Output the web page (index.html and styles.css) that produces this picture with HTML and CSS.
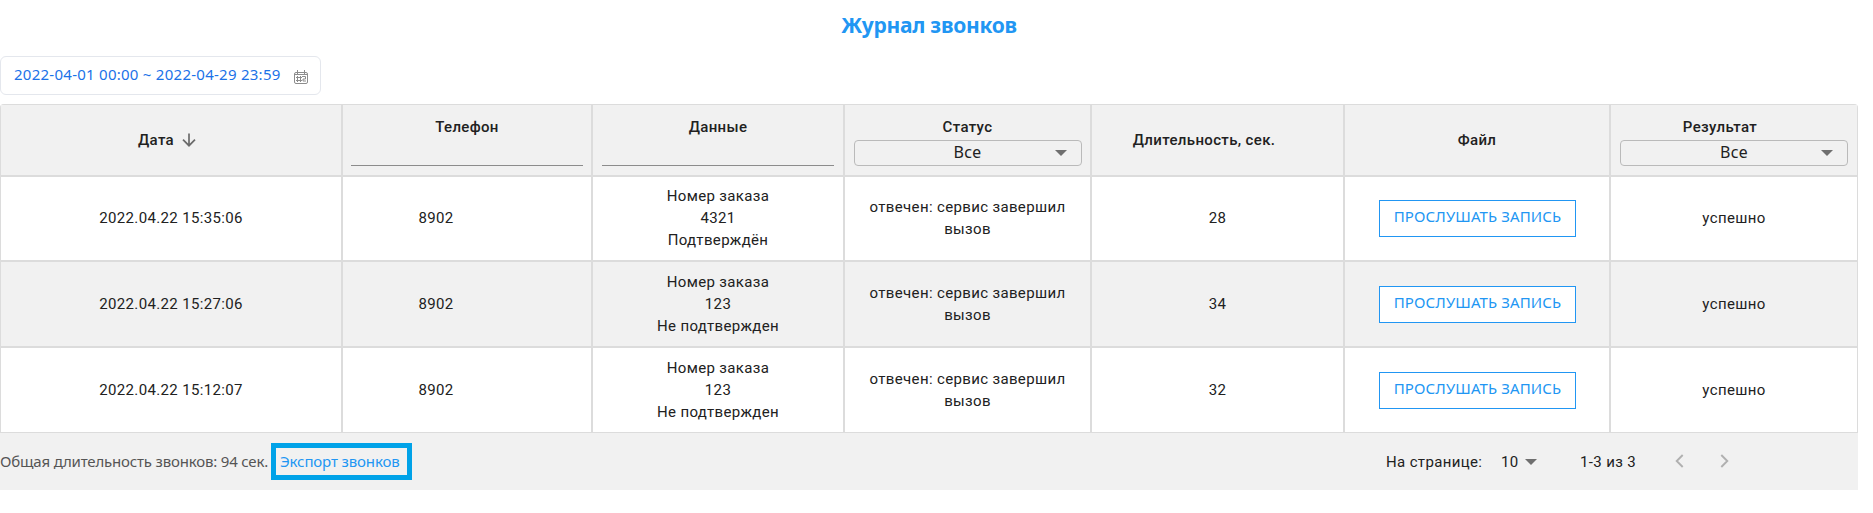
FILE: index.html
```html
<!DOCTYPE html>
<html lang="ru">
<head>
<meta charset="utf-8">
<title>Журнал звонков</title>
<link rel="stylesheet" href="styles.css">
</head>
<body>
<main class="page">
  <h1 class="title"><span>Журнал звонков</span></h1>
  <div class="range"><span class="range-text">2022-04-01 00:00 ~ 2022-04-29 23:59</span>
    <svg class="calendar" width="14" height="14" viewBox="0 0 14 14" fill="none" stroke="#8c8c8c"><path d="M3.500 0v4M10.500 0v4M.5 12V4Q.5 2.500 2 2.500h10q1.500 0 1.500 1.500v8q0 1.500-1.500 1.500H2Q.5 13.500.5 12zM.5 4.500h13M3.500 6v6M6.500 6v6M2 7.500h6M2 10.500h6M8 6.500h3.500v2.500H9v2h3"/></svg>
  </div>
  <section class="grid">
    <div class="row head">
      <div class="cell date"><span class="sort">Дата<svg width="14" height="14" viewBox="0 0 14 14" fill="none" stroke="#6b6b6b" stroke-width="1.700"><path d="M7 .5v12M1 6.700l6 6 6-6"/></svg></span></div>
      <div class="cell filter"><span class="label">Телефон</span><div class="line"></div></div>
      <div class="cell filter"><span class="label">Данные</span><div class="line"></div></div>
      <div class="cell filter"><span class="label">Статус</span><div class="select"><span>Все</span><i class="caret"></i></div></div>
      <div class="cell duration">Длительность, сек.</div>
      <div class="cell">Файл</div>
      <div class="cell filter result"><span class="label">Результат</span><div class="select"><span>Все</span><i class="caret"></i></div></div>
    </div>
    <div class="row first">
      <div class="cell">2022.04.22 15:35:06</div><div class="cell phone">8902</div><div class="cell">Номер заказа<br>4321<br>Подтверждён</div><div class="cell">отвечен: сервис завершил<br>вызов</div><div class="cell">28</div><div class="cell"><button class="listen">ПРОСЛУШАТЬ ЗАПИСЬ</button></div><div class="cell">успешно</div>
    </div>
    <div class="row alt">
      <div class="cell">2022.04.22 15:27:06</div><div class="cell phone">8902</div><div class="cell">Номер заказа<br>123<br>Не подтвержден</div><div class="cell">отвечен: сервис завершил<br>вызов</div><div class="cell">34</div><div class="cell"><button class="listen">ПРОСЛУШАТЬ ЗАПИСЬ</button></div><div class="cell">успешно</div>
    </div>
    <div class="row">
      <div class="cell">2022.04.22 15:12:07</div><div class="cell phone">8902</div><div class="cell">Номер заказа<br>123<br>Не подтвержден</div><div class="cell">отвечен: сервис завершил<br>вызов</div><div class="cell">32</div><div class="cell"><button class="listen">ПРОСЛУШАТЬ ЗАПИСЬ</button></div><div class="cell">успешно</div>
    </div>
  </section>
  <footer class="footer">
    <span class="total">Общая длительность звонков: 94 сек.</span>
    <a class="export"><span>Экспорт звонков</span></a>
    <div class="pager">
      <span class="per">На странице:</span><span class="size">10</span><i class="caret"></i><span class="count">1-3 из 3</span>
      <svg class="prev" width="9" height="14" viewBox="0 0 9 14" fill="none" stroke="#b0b0b0" stroke-width="1.900"><path d="M7.700 1l-6 6 6 6"/></svg>
      <svg width="9" height="14" viewBox="0 0 9 14" fill="none" stroke="#b0b0b0" stroke-width="1.900"><path d="M1.300 1l6 6-6 6"/></svg>
    </div>
  </footer>
</main>
</body>
</html>
```

FILE: styles.css
```css
* { box-sizing: border-box; }
body { margin: 0; background: #fff; color: #212121; font-family: Roboto, sans-serif; font-size: 15px; line-height: 22px; letter-spacing: .35px; }
.page { width: 1858px; }
.title { margin: 0; height: 56px; padding-top: 10px; font: 700 21px/30px "Noto Sans", sans-serif; letter-spacing: -.25px; color: #2196f3; text-align: center; }
.range { display: flex; width: 321px; height: 39px; padding: 0 12px 0 13px; border: 1px solid #e4e7ed; border-radius: 6px; font: 15px/35px "Noto Sans", sans-serif; letter-spacing: .26px; color: #1b72e8; white-space: nowrap; }
.range-text { width: 280px; }
.calendar { margin-top: 13px; flex: none; }
.grid { margin-top: 9px; border-radius: 4px 4px 0 0; overflow: hidden; }
.row { display: grid; grid-template-columns: 342px 250px 252px 247px 253px 266px 248px; height: 86px; }
.row.first { height: 85px; }
.cell { display: flex; align-items: center; justify-content: center; text-align: center; border: 1px solid #dcdcdc; padding-bottom: 1px; white-space: nowrap; }
.head { height: 72px; background: #f1f1f1; font-weight: 500; }
.head .cell { padding-bottom: 0; }
.head .date { padding-right: 8px; }
.alt { background: #f1f1f1; }
.filter { flex-direction: column; justify-content: flex-start; padding: 11px 9px 0; }
.label { height: 24px; }
.result .label { margin-right: 28px; }
.line { width: 232px; height: 26px; border-bottom: 1px solid #8c8c8c; }
.select { display: grid; grid-template-columns: 1fr auto; align-items: center; width: 228px; height: 26px; padding: 0 14px 0 41px; border: 1px solid #bababa; border-radius: 4px; font: 400 16px/24px "Noto Sans", sans-serif; letter-spacing: .4px; }
.select span { padding-right: 15px; margin-top: -2px; }
.caret { border: 6px solid transparent; border-top-color: #6f6f6f; border-bottom: 0; }
.sort { display: flex; align-items: center; gap: 8px; }
.duration { padding-right: 27px; }
.phone { padding-right: 62px; }
.listen { width: 197px; height: 37px; margin: 2px 0 0 1px; padding: 0 0 5px; border: 1px solid #2196f3; background: #fff; color: #2196f3; font: 15px/30px "Noto Sans", sans-serif; letter-spacing: .12px; white-space: nowrap; }
.first .listen { margin-top: 0; }
.footer { display: flex; align-items: center; height: 57px; background: #f1f1f1; font-family: "Noto Sans", sans-serif; color: #555; white-space: nowrap; }
.total { width: 271px; letter-spacing: -.18px; padding-bottom: 1px; }
.export { display: flex; align-items: center; width: 141px; height: 37px; padding: 0 0 1px 4px; border: 5px solid #00a2e8; color: #2196f3; letter-spacing: -.13px; }
.pager { display: flex; align-items: center; margin-left: auto; width: 472px; color: #212121; font-family: Roboto, sans-serif; }
.per { width: 115px; }
.size { width: 24px; }
.count { margin-left: 43px; width: 95px; }
.pager svg { margin-bottom: 2px; }
.prev { margin-right: 36px; }
```
